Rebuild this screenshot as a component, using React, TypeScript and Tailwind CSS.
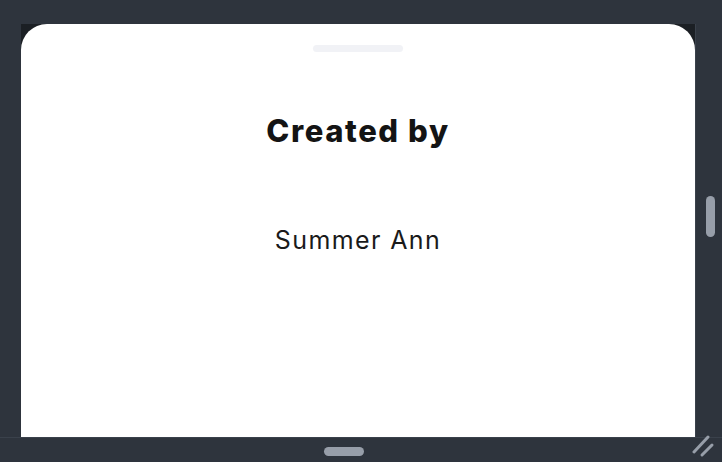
import React from 'react';

const App: React.FC = () => {
    return (
        <div className="w-[722px] h-[462px] bg-[#2e343d] grid grid-cols-[21px_674px_27px] grid-rows-[24px_413px_25px] overflow-hidden" style={{ fontFamily: 'Inter, "Liberation Sans", sans-serif' }}>
            <div className="col-span-3" />

            <div />
            <div className="bg-[#1b1f24]">
                <div className="h-full bg-white rounded-t-[26px] flex flex-col items-center">
                    <div className="mt-[21px] w-[90px] h-[7px] rounded-full bg-[#f1f2f6]" />
                    <h1 className="mt-[61px] text-[31px] leading-[36px] font-extrabold text-[#141414] tracking-[1.6px]">
                        Created by
                    </h1>
                    <p className="mt-[76px] text-[25px] leading-[30px] text-[#1a1a1a] tracking-[1.4px]">
                        Summer Ann
                    </p>
                </div>
            </div>
            <div className="border-l border-[#3a414b] pt-[172px] pl-[10px]">
                <div className="w-[9px] h-[41px] rounded-full bg-[#979ea9]" />
            </div>

            <div className="col-span-3 border-t border-[#3a414b] flex items-start relative">
                <div className="mt-[9px] ml-[324px] w-[40px] h-[9px] rounded-full bg-[#979ea9]" />
                <svg className="absolute right-[6px] bottom-[4px]" width="24" height="24" viewBox="0 0 24 24" fill="none">
                    <path d="M2 18 L16 3" stroke="#979ea9" strokeWidth="3" strokeLinecap="round" />
                    <path d="M10 21 L20 11" stroke="#979ea9" strokeWidth="3" strokeLinecap="round" />
                </svg>
            </div>
        </div>
    );
};

export default App;
